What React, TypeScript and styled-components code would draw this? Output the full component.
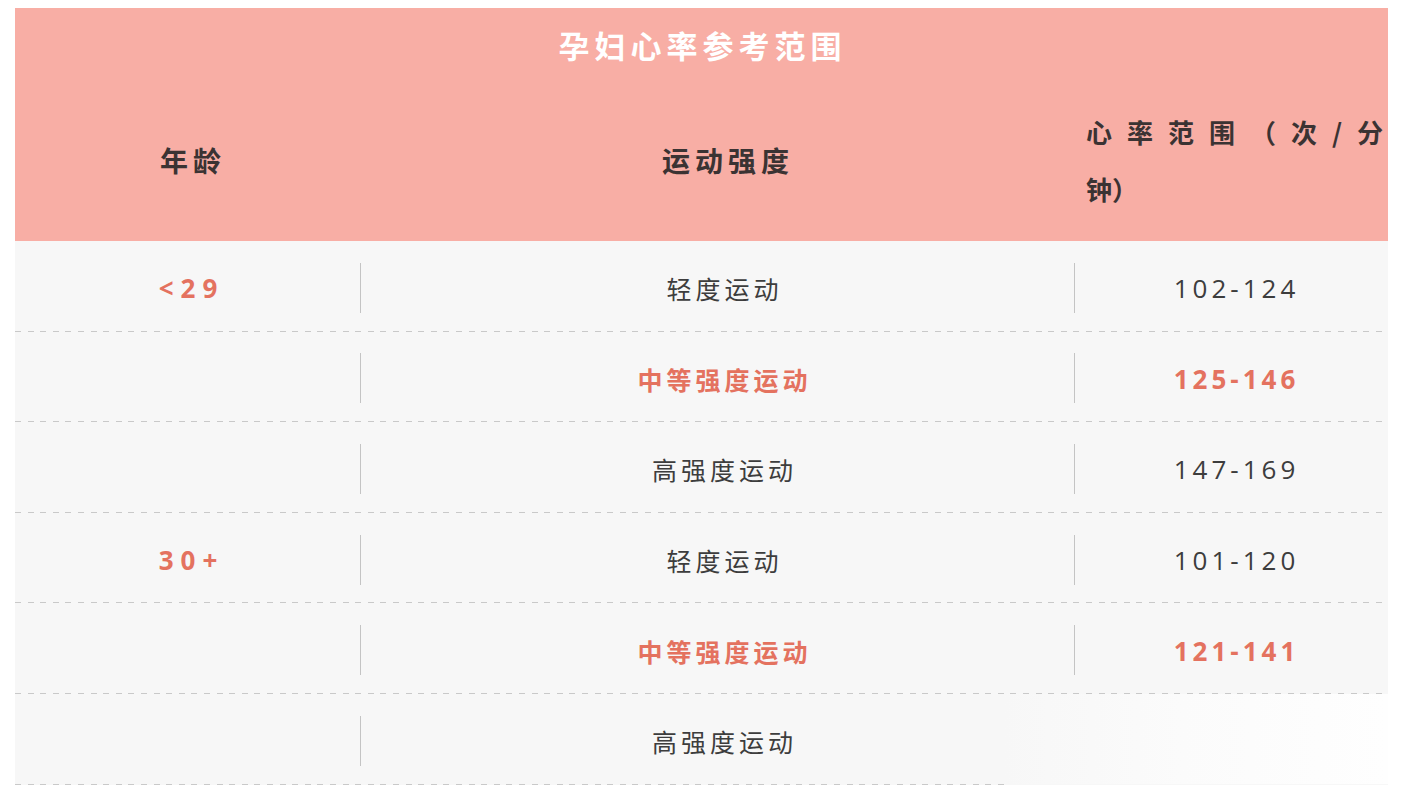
import React from "react";
import styled, { createGlobalStyle } from "styled-components";

const Global = createGlobalStyle`
  html, body { margin: 0; padding: 0; background: #ffffff; }
  body { font-family: "Noto Sans CJK SC", "Noto Sans", sans-serif; }
`;

const Page = styled.div`
  padding: 8px 20px 0 15px;
  width: 1373px;
`;

const Table = styled.div`
  display: flex;
  flex-direction: column;
  width: 1373px;
`;

const Header = styled.div`
  background: #f8aea5;
  display: flex;
  flex-direction: column;
`;

const Title = styled.div`
  height: 74px;
  line-height: 74px;
  text-align: center;
  color: #ffffff;
  font-size: 31px;
  font-weight: 700;
  letter-spacing: 5px;
  padding-left: 2px;
`;

const HeadRow = styled.div`
  display: grid;
  grid-template-columns: 346px 714px 313px;
  height: 159px;
  align-items: center;
`;

const HeadCell = styled.div<{ $shift?: number }>`
  text-align: center;
  color: #3b3333;
  font-size: 28px;
  font-weight: 700;
  letter-spacing: 5px;
  padding-left: ${(p) => p.$shift ?? 0}px;
  padding-bottom: 3px;
`;

const HeadWide = styled.div`
  color: #3b3333;
  font-size: 26px;
  font-weight: 700;
  letter-spacing: 15px;
  line-height: 57px;
  padding-left: 11px;
  padding-bottom: 3px;
  white-space: nowrap;
`;

const Tight = styled.span`
  letter-spacing: 0;
`;

const Body = styled.div`
  background: #f7f7f7;
  display: flex;
  flex-direction: column;
`;

const Row = styled.div<{ $fade?: boolean }>`
  display: grid;
  grid-template-columns: 345px 1px 713px 1px 313px;
  height: 89.6px;
  align-items: center;
  background: ${(p) =>
    p.$fade
      ? "linear-gradient(to right, #f7f7f7 0, #f7f7f7 72%, #fbfbfb 85%, #fefefe 100%)"
      : "transparent"};
`;

const Sep = styled.div<{ $faint?: boolean }>`
  width: 1px;
  height: 50px;
  margin-top: 4px;
  background: ${(p) => (p.$faint ? "transparent" : "#c4c4c4")};
`;

const Cell = styled.div<{ $red?: boolean; $num?: boolean; $shift?: number; $spacing?: number }>`
  text-align: center;
  color: ${(p) => (p.$red ? "#e4725f" : "#3d3d3d")};
  font-weight: ${(p) => (p.$red ? 700 : 400)};
  font-size: ${(p) => (p.$num ? 26 : 25)}px;
  letter-spacing: ${(p) => p.$spacing ?? (p.$num ? 4 : 4)}px;
  padding-left: ${(p) => p.$shift ?? 0}px;
  padding-top: 5px;
  font-family: ${(p) =>
    p.$num ? `"Open Sans", "Noto Sans", sans-serif` : `"Noto Sans CJK SC", sans-serif`};
`;

const Divider = styled.div<{ $w?: number }>`
  height: 1px;
  width: ${(p) => (p.$w ? `${p.$w}px` : "100%")};
  background: repeating-linear-gradient(
    to right,
    #c9c9c9 0 6px,
    transparent 6px 12.6px
  );
`;

type RowData = {
  age: string;
  level: string;
  range: string;
  red?: boolean;
};

const rows: RowData[] = [
  { age: "<29", level: "轻度运动", range: "102-124" },
  { age: "", level: "中等强度运动", range: "125-146", red: true },
  { age: "", level: "高强度运动", range: "147-169" },
  { age: "30+", level: "轻度运动", range: "101-120" },
  { age: "", level: "中等强度运动", range: "121-141", red: true },
  { age: "", level: "高强度运动", range: "" },
];

export default function App() {
  return (
    <Page>
      <Global />
      <Table>
        <Header>
          <Title>孕妇心率参考范围</Title>
          <HeadRow>
            <HeadCell $shift={10}>年龄</HeadCell>
            <HeadCell $shift={20}>运动强度</HeadCell>
            <HeadWide>
              心率范围（次/分
              <br />
              <Tight>钟</Tight>）
            </HeadWide>
          </HeadRow>
        </Header>
        <Body>
          {rows.map((r, i) => {
            const last = i === rows.length - 1;
            return (
              <React.Fragment key={i}>
                <Row $fade={last}>
                  <Cell $red $num $shift={8} $spacing={7}>
                    {r.age}
                  </Cell>
                  <Sep />
                  <Cell $red={r.red} $shift={14}>
                    {r.level}
                  </Cell>
                  <Sep $faint={last} />
                  <Cell $red={r.red} $num $shift={10}>
                    {r.range}
                  </Cell>
                </Row>
                <Divider $w={last ? 995 : undefined} />
              </React.Fragment>
            );
          })}
        </Body>
      </Table>
    </Page>
  );
}
